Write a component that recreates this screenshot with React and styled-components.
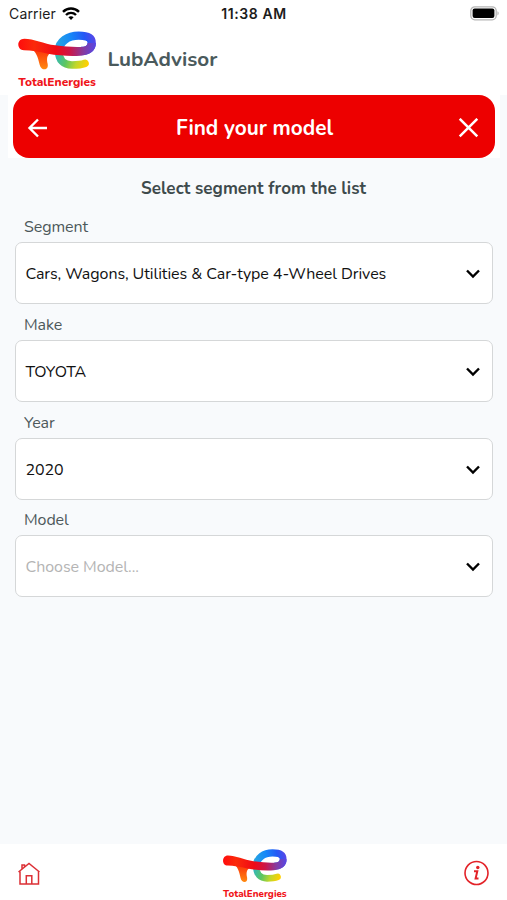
import React, { useId } from "react";
import styled, { createGlobalStyle } from "styled-components";

const GlobalStyle = createGlobalStyle`
  * {
    box-sizing: border-box;
  }
  body {
    margin: 0;
    background-color: #f8fafc;
    font-family: Nunito, "Noto Sans", "Open Sans", sans-serif;
  }
`;

const Screen = styled.div`
  display: flex;
  flex-direction: column;
  height: 900px;
  overflow: hidden;
  background-color: #f8fafc;
`;

const StatusBar = styled.div`
  display: grid;
  grid-template-columns: 1fr auto 1fr;
  align-items: center;
  height: 27px;
  padding: 0 8px 0 9px;
  background-color: #fff;
  color: #1c1c1c;
  font-family: Inter, sans-serif;
  font-size: 14px;
`;

const Carrier = styled.div`
  display: flex;
  align-items: center;
  gap: 6px;
  letter-spacing: 0.15px;
`;

const Time = styled.div`
  font-weight: 600;
  letter-spacing: 0.6px;
`;

const Battery = styled.div`
  display: flex;
  justify-content: flex-end;
`;

const Header = styled.header`
  display: flex;
  height: 68px;
  padding: 3px 0 0 16.5px;
  background-color: #fff;
`;

const AppName = styled.h1`
  margin: 14px 0 0 11px;
  font-size: 20.7px;
  line-height: 30px;
  font-weight: 700;
  color: #4a5a5c;
`;

const TitleWrap = styled.div`
  margin: 0 7px 0 8px;
  padding: 0 5px;
  background-color: #fff;
`;

const TitleBar = styled.div`
  display: flex;
  align-items: center;
  justify-content: space-between;
  height: 63px;
  padding: 2px 15px 0 14px;
  border-radius: 16px;
  background-color: #ed0000;
  color: #fff;

  & h2 {
    margin: 0;
    padding: 1px 0 0 2px;
    font-size: 20.8px;
    font-weight: 700;
  }
`;

const Hint = styled.p`
  margin: 19px 0 0;
  text-align: center;
  font-size: 17px;
  line-height: 24px;
  font-weight: 700;
  letter-spacing: 0.05px;
  color: #3e4a4c;
`;

const Form = styled.main`
  display: flex;
  flex-direction: column;
  flex: 1;
  padding: 14.4px 14.5px 0 15px;
`;

const Field = styled.div`
  height: 97.7px;
`;

const Label = styled.div`
  height: 27px;
  padding-left: 9px;
  font-size: 16px;
  line-height: 25px;
  letter-spacing: -0.1px;
  color: #4d585a;
`;

const Select = styled.div`
  display: flex;
  align-items: center;
  justify-content: space-between;
  height: 62px;
  padding: 2px 11px 0 9.5px;
  border: 1px solid #d5d7d8;
  border-radius: 7px;
  background-color: #fff;
  font-size: 16px;
  letter-spacing: -0.06px;
  color: ${({ $empty }) => ($empty ? "#b4b4b4" : "#111")};
`;

const Footer = styled.footer`
  display: flex;
  justify-content: space-between;
  height: 56px;
  padding: 0 17px;
  background-color: #fff;
`;

const FooterItem = styled.div`
  display: flex;
  padding-top: ${({ $top }) => $top}px;
  padding-left: ${({ $left }) => $left || 0}px;
`;

function Logo({ width, height }) {
  const id = useId();
  return (
    <svg width={width} height={height} viewBox="50 90 240 180" preserveAspectRatio="none" fill="none">
      <defs>
        <linearGradient id={`${id}bar`} gradientUnits="userSpaceOnUse" x1="55" y1="0" x2="288" y2="0">
          <stop offset="0" stopColor="#ff0d0d" />
          <stop offset="0.2" stopColor="#fb2a0a" />
          <stop offset="0.48" stopColor="#f00a16" />
          <stop offset="0.66" stopColor="#cc1648" />
          <stop offset="0.83" stopColor="#873a9e" />
          <stop offset="1" stopColor="#5548e8" />
        </linearGradient>
        <linearGradient id={`${id}stem`} x1="0" y1="0" x2="0" y2="1">
          <stop offset="0" stopColor="#fb2a0a" />
          <stop offset="1" stopColor="#ff8a10" />
        </linearGradient>
        <linearGradient id={`${id}top`} gradientUnits="userSpaceOnUse" x1="170" y1="150" x2="285" y2="130">
          <stop offset="0" stopColor="#28a6e0" />
          <stop offset="0.4" stopColor="#1688f8" />
          <stop offset="0.75" stopColor="#2458f5" />
          <stop offset="1" stopColor="#5548e8" />
        </linearGradient>
        <linearGradient id={`${id}bottom`} gradientUnits="userSpaceOnUse" x1="166" y1="158" x2="262" y2="192">
          <stop offset="0" stopColor="#2eb6c2" />
          <stop offset="0.38" stopColor="#5dc660" />
          <stop offset="0.68" stopColor="#c1d72a" />
          <stop offset="1" stopColor="#ffd000" />
        </linearGradient>
      </defs>
      <path
        d="M175 152C175 181 190 195 215 195C232 195 243 194 254 190"
        stroke={`url(#${id}bottom)`}
        strokeWidth="23"
        strokeLinecap="round"
      />
      <path
        d="M175 154C175 124 204 107 235 107C260 107 274 113 274 128C274 145 262 153 242 153"
        stroke={`url(#${id}top)`}
        strokeWidth="25"
      />
      <path
        d="M90 143C108 156 112 168 118 194C122 213 146 213 142 192C139 178 139 168 149 160L162 144Z"
        fill={`url(#${id}stem)`}
      />
      <path
        d="M72 116C100 116 130 131 165 136C197 140 229 142 248 140C258 139 262 135 262 129L287 129C287 153 268 165 240 167C205 169 172 166 143 161C116 156 93 151 71 151C48 151 48 116 72 116Z"
        fill={`url(#${id}bar)`}
      />
      <text
        x="54"
        y="258"
        textLength="233"
        lengthAdjust="spacingAndGlyphs"
        fontFamily="Nunito, Lato, sans-serif"
        fontSize="35"
        fontWeight="800"
        fill="#f01419"
      >
        TotalEnergies
      </text>
    </svg>
  );
}

function Wifi() {
  return (
    <svg width="18" height="14" viewBox="0 0 18 14" fill="none" stroke="#000" strokeWidth="2.4">
      <path d="M1 4.8C5.5 0.3 12.5 0.3 17 4.8" />
      <path d="M4 8C6.8 5.2 11.2 5.2 14 8" />
      <path d="M6.4 10.3C7.9 8.9 10.1 8.9 11.6 10.3L9 13Z" fill="#000" stroke="none" />
    </svg>
  );
}

function Chevron() {
  return (
    <svg width="16" height="10" viewBox="0 0 16 10" fill="none">
      <path d="M2 1.5L8 7.5L14 1.5" stroke="#000" strokeWidth="2.4" />
    </svg>
  );
}

const fields = [
  { label: "Segment", value: "Cars, Wagons, Utilities & Car-type 4-Wheel Drives" },
  { label: "Make", value: "TOYOTA" },
  { label: "Year", value: "2020" },
  { label: "Model", placeholder: "Choose Model..." },
];

export default function App() {
  return (
    <>
      <GlobalStyle />
      <Screen>
        <StatusBar>
          <Carrier>
            Carrier <Wifi />
          </Carrier>
          <Time>11:38 AM</Time>
          <Battery>
            <svg width="29" height="15" viewBox="0 0 29 15">
              <rect x="0.8" y="0.8" width="25.4" height="13" rx="4" fill="#fff" stroke="#b5b5b5" strokeWidth="1.3" />
              <rect x="2.6" y="2.6" width="21.8" height="9.4" rx="2" fill="#000" />
              <path d="M27.5 5.2C29 5.8 29 8.8 27.5 9.4Z" fill="#aaa" />
            </svg>
          </Battery>
        </StatusBar>
        <Header>
          <Logo width={80} height={60} />
          <AppName>LubAdvisor</AppName>
        </Header>
        <TitleWrap>
          <TitleBar>
            <svg width="22" height="20" viewBox="0 0 22 20" fill="none" stroke="#fff" strokeWidth="2.4">
              <path d="M20 10H2.5M11 1.5L2.5 10L11 18.5" />
            </svg>
            <h2>Find your model</h2>
            <svg width="22" height="20" viewBox="0 0 22 20" fill="none" stroke="#fff" strokeWidth="2.5">
              <path d="M1.7 0.8L19.3 18.3M19.3 0.8L1.7 18.3" />
            </svg>
          </TitleBar>
        </TitleWrap>
        <Hint>Select segment from the list</Hint>
        <Form>
          {fields.map(({ label, value, placeholder }) => (
            <Field key={label}>
              <Label>{label}</Label>
              <Select $empty={!value}>
                {value || placeholder}
                <Chevron />
              </Select>
            </Field>
          ))}
        </Form>
        <Footer>
          <FooterItem $top={14.5}>
            <svg width="24" height="26" viewBox="0 0 24 26" fill="none" stroke="#dc3036" strokeWidth="1.5">
              <path d="M1.5 13L12 4.5L22.5 13M3 12.5V25H21.5V12.5M5 10V6H7.5V8" />
              <path d="M9.3 25V16.7H14.8V25" />
            </svg>
          </FooterItem>
          <FooterItem $top={4} $left={5}>
            <Logo width={65.5} height={52} />
          </FooterItem>
          <FooterItem $top={16}>
            <svg width="26" height="26" viewBox="0 0 26 26" fill="none">
              <circle cx="12.5" cy="13" r="11.5" stroke="#e32228" strokeWidth="1.6" />
              <circle cx="13.8" cy="7.5" r="1.7" fill="#e32228" />
              <path d="M10 11.2H13.3L11.6 18.6H14.5" stroke="#e32228" strokeWidth="2" />
            </svg>
          </FooterItem>
        </Footer>
      </Screen>
    </>
  );
}
